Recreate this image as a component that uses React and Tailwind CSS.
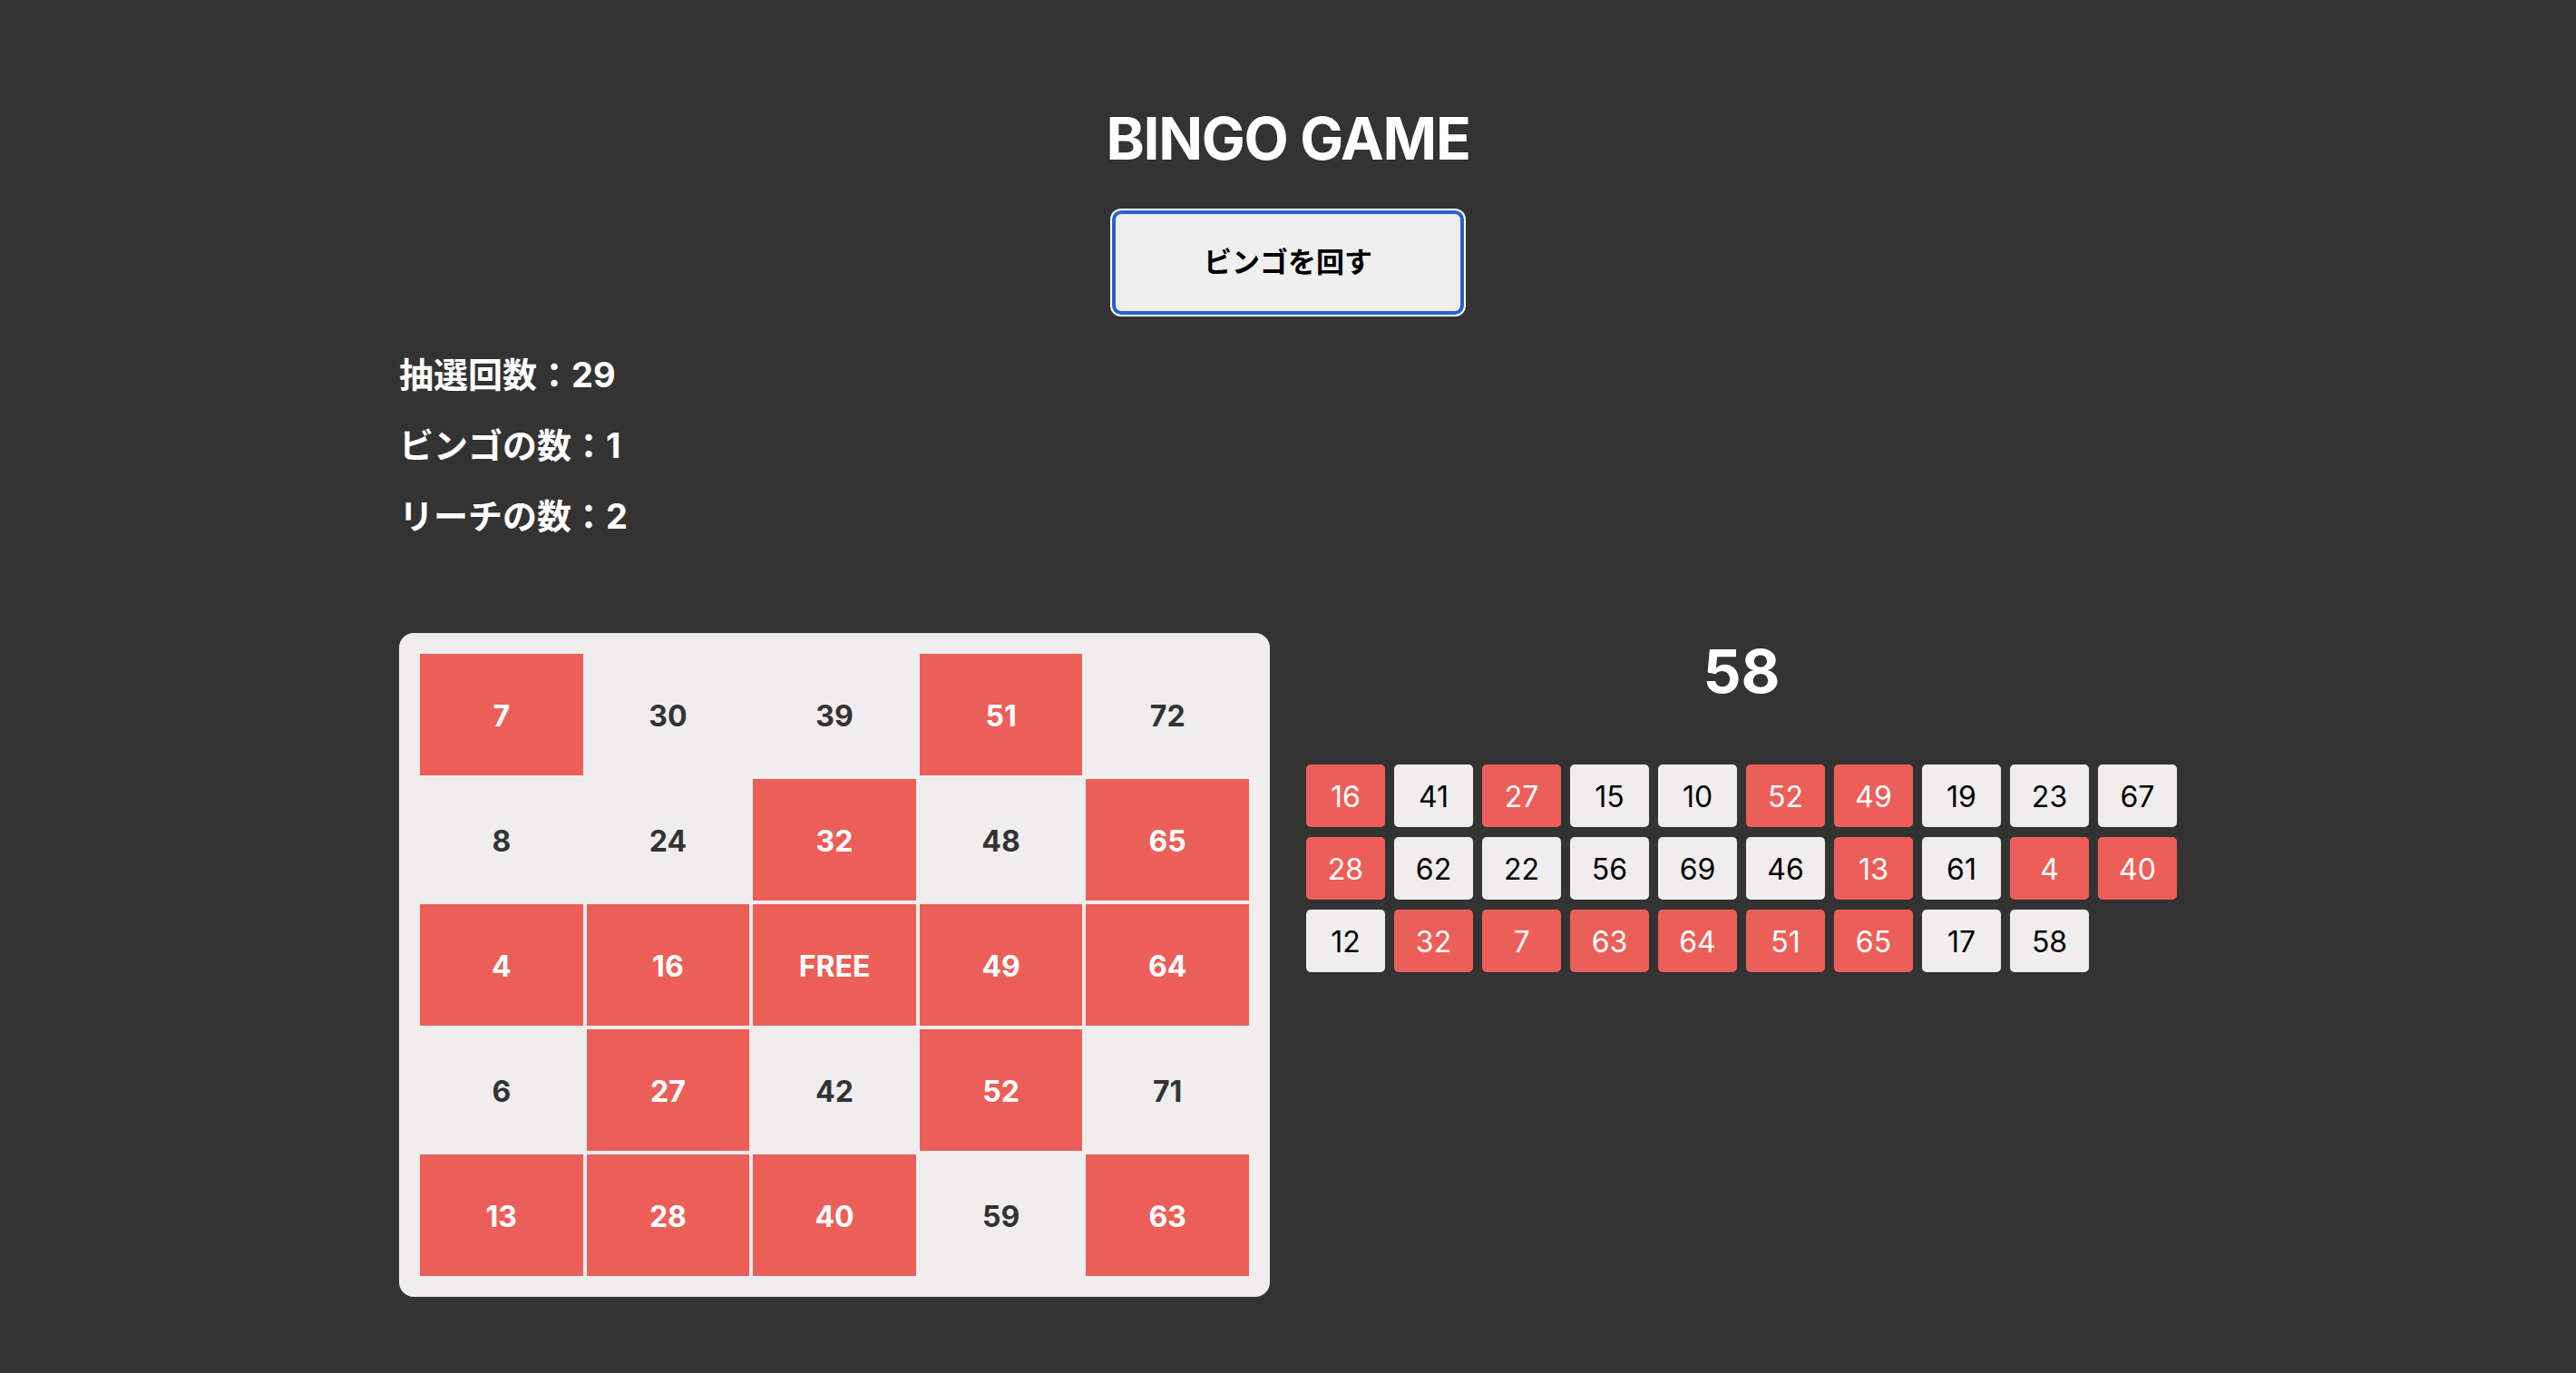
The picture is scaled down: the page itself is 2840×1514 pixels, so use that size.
import React from 'react';

const board = [
  [7, 30, 39, 51, 72],
  [8, 24, 32, 48, 65],
  [4, 16, 'FREE', 49, 64],
  [6, 27, 42, 52, 71],
  [13, 28, 40, 59, 63],
];

const drawn = [16, 41, 27, 15, 10, 52, 49, 19, 23, 67, 28, 62, 22, 56, 69, 46, 13, 61, 4, 40, 12, 32, 7, 63, 64, 51, 65, 17, 58];

const App = () => {
  const onBoard = new Set(board.flat());
  const hit = (n) => n === 'FREE' || drawn.includes(n);

  return (
    <div className="min-h-screen w-full bg-[#333333] font-['Inter','Noto_Sans_CJK_JP',sans-serif] pb-20">
      <div className="w-[1960px] mx-auto">
        <h1 className="pt-[121px] text-center text-[64px] leading-[64px] font-bold text-white tracking-[-0.02em]">BINGO GAME</h1>

        <div className="flex justify-center mt-[47px]">
          <button className="w-[388px] h-[115px] rounded-[10px] border-[4px] border-[#2c5fcb] bg-[#efefef] shadow-[0_0_0_2px_#ffffff] text-[31px] font-bold text-black">
            ビンゴを回す
          </button>
        </div>

        <div className="mt-[47px] flex flex-col gap-[40px] text-white font-bold text-[38px]">
          <div className="h-[38px] leading-[38px]">抽選回数：{drawn.length}</div>
          <div className="h-[38px] leading-[38px]">ビンゴの数：1</div>
          <div className="h-[38px] leading-[38px]">リーチの数：2</div>
        </div>

        <div className="mt-[110px] flex gap-[40px] items-start">
          {/* カード */}
          <div className="w-[960px] rounded-[16px] bg-[#efeded] p-[23px] grid grid-cols-5 gap-[4px]">
            {board.flat().map((n, i) => (
              <div
                key={i}
                className={`h-[134px] pt-[3px] flex items-center justify-center text-[32px] font-bold ${hit(n) ? 'bg-[#ec5f59] text-white' : 'text-[#333333]'}`}
              >
                {n}
              </div>
            ))}
          </div>

          {/* 抽選結果 */}
          <div className="w-[960px] flex flex-col">
            <div className="mt-[9px] text-center text-[66px] leading-[66px] font-bold text-white">{drawn[drawn.length - 1]}</div>
            <div className="mt-[70px] grid grid-cols-10 gap-x-[10px] gap-y-[11px]">
              {drawn.map((n) => (
                <div
                  key={n}
                  className={`h-[69px] pt-[2px] rounded-[5px] flex items-center justify-center text-[32px] ${onBoard.has(n) ? 'bg-[#ec5f59] text-white' : 'bg-[#efeded] text-black'}`}
                >
                  {n}
                </div>
              ))}
            </div>
          </div>
        </div>
      </div>
    </div>
  );
};

export default App;
